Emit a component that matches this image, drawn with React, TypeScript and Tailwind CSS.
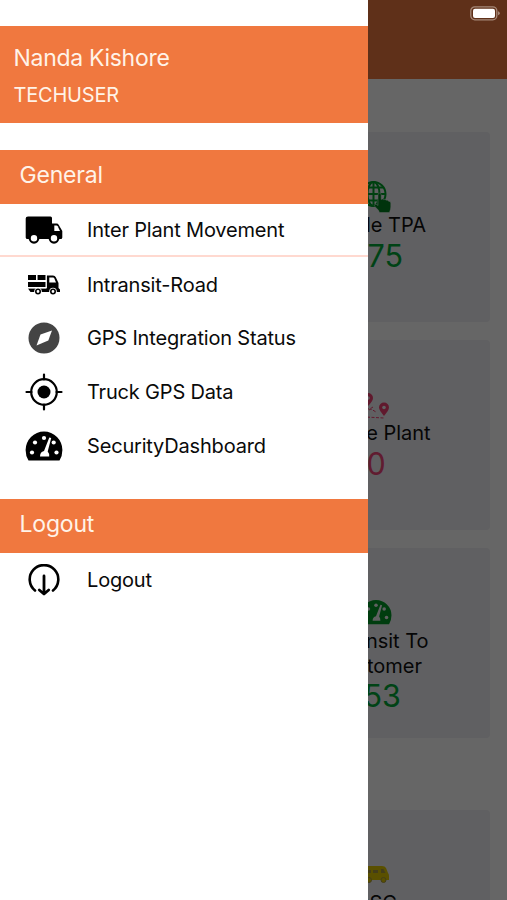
import type { ReactNode } from 'react';

interface MenuItem {
  label: string;
  icon: ReactNode;
  divider?: boolean;
}

const TruckIcon = () => (
  <svg viewBox="0 0 38 28" className="w-[38px] h-7">
    <path d="M3 .5H25.500A1.500 1.500 0 0 1 27 2V7.500h4.500q1.500 0 2.300 1.400L37.300 15v6.500q0 1.500-1.500 1.500H2.500Q.7 23 .7 21.500V2.500Q.7.500 3 .5Z" />
    <path d="M29.300 9.500h2.200q.8 0 1.200.7L35 15h-5.700Z" fill="#fff" />
    <circle cx="9" cy="22.300" r="4.300" fill="#fff" stroke="#000" strokeWidth="2.200" />
    <circle cx="29" cy="22.300" r="4.300" fill="#fff" stroke="#000" strokeWidth="2.200" />
  </svg>
);

const LoadedTruckIcon = () => (
  <svg viewBox="0 0 34 22" className="w-[34px] h-[22px]">
    <path d="M1 1h8v5H1zM10.500 1h8v5h-8zM1 8h17.500v5H1zM1 14.500h18.500V1.500H26q2 0 2.800 1.800L31.500 9v5l1.500 1.500V18H3.500Z" />
    <path d="M1 7h18.500M9.700 1v5.500M1 13.800h18.500M19.500 1v13" stroke="#fff" strokeWidth=".8" />
    <path d="M22.300 3.500H26q1 0 1.400 1L29 8.500h-6.700Z" fill="#fff" />
    <circle cx="11" cy="17.500" r="3.800" fill="#fff" />
    <circle cx="26" cy="17.500" r="3.800" fill="#fff" />
    <circle cx="11" cy="17.500" r="2.200" fill="none" stroke="#000" strokeWidth="1.600" />
    <circle cx="26" cy="17.500" r="2.200" fill="none" stroke="#000" strokeWidth="1.600" />
  </svg>
);

const CompassIcon = () => (
  <svg viewBox="0 0 32 32" className="w-8 h-8">
    <circle cx="16" cy="16" r="15.500" fill="#444" />
    <path d="M24 8.500 20.300 18.500 8.500 23.500 12.500 12.500Z" fill="#fff" />
  </svg>
);

const TargetIcon = () => (
  <svg viewBox="0 0 38 38" className="w-[38px] h-[38px]" stroke="#000" strokeWidth="2.200" strokeLinecap="round">
    <circle cx="19" cy="19" r="12.800" fill="none" />
    <circle cx="19" cy="19" r="6.500" stroke="none" />
    <path d="M19 1.500v5M19 31.500v5M1.500 19h5M31.500 19h5" />
  </svg>
);

interface GaugeIconProps {
  fill?: string;
  hole?: string;
  className?: string;
}

const GaugeIcon = ({ fill = '#000', hole = '#fff', className = 'w-[38px] h-[30px]' }: GaugeIconProps) => (
  <svg viewBox="0 0 38 30" className={className}>
    <path d="M3.500 29.500Q.6 25 .6 19A18.400 18.400 0 0 1 37.400 19q0 6-2.900 10.500Z" fill={fill} />
    <g fill={hole}>
      <circle cx="7" cy="21.500" r="2.100" />
      <circle cx="10" cy="11.500" r="2.100" />
      <circle cx="19" cy="7" r="2.100" />
      <circle cx="28.700" cy="11.500" r="2.100" />
      <circle cx="31.500" cy="21.500" r="2.100" />
      <path d="m24.300 6.500 1.900.6-3.500 13.300q1.600 1.500 1.500 5.100h-9.200q0-4.700 4-5.500Z" />
    </g>
  </svg>
);

const LogoutIcon = () => (
  <svg viewBox="0 0 32 32" className="w-8 h-8" fill="none" stroke="#000" strokeLinecap="round" strokeLinejoin="round">
    <path d="M7 26.500A14.300 14.300 0 1 1 25 26.500" strokeWidth="2.600" />
    <path d="M16 12v17M11.300 26l4.700 4 4.700-4" strokeWidth="2.800" />
  </svg>
);

const GlobeTouchIcon = () => (
  <svg viewBox="0 0 34 32" className="w-[34px] h-8">
    <g fill="none" stroke="#00a02a" strokeWidth="2">
      <circle cx="14.500" cy="13" r="12" />
      <ellipse cx="14.500" cy="13" rx="6" ry="12" />
      <path d="M14.500 1v24M2.500 13h24M5 6.500h19M5 19.500h19" />
    </g>
    <path
      d="M19 14q0-1.900 1.600-1.900T22.200 14v4.500q1.300-1 2.600.2 1.500-.8 2.400.5 1.600-.4 2.300 1 2.300-.2 2.300 1.800v4q0 2-1.300 5.500H20.500q-1-3-4.700-6-1-1.500.3-2 1.500-.5 2.900 1Z"
      fill="#008020"
      stroke="#f0f0f4"
      strokeWidth=".5"
    />
  </svg>
);

const RouteIcon = () => (
  <svg viewBox="0 0 44 28" className="w-11 h-7 mr-[18px]">
    <g fill="#f04070">
      <path d="M23 13q-5-5-5-8a5 5 0 0 1 10 0q0 3-5 8Z" />
      <path d="M39 23q-5-6-5-8.500a5 5 0 0 1 10 0Q44 17 39 23Z" />
    </g>
    <g fill="#f0f0f4">
      <circle cx="23" cy="5" r="1.800" />
      <circle cx="39" cy="14.500" r="1.800" />
    </g>
    <path d="M5 22q5-7 12-6t11-2M20 19l6-3 5 3M4 24h16l19 1" fill="none" stroke="#f04070" strokeWidth="1" strokeDasharray="3 1.500" />
  </svg>
);

const VanIcon = () => (
  <svg viewBox="0 0 28 18" className="w-7 h-[18px]">
    <path d="M2 1h18q3 0 4 2l2 5q1 1 1 3v4H1V2q0-1 1-1Z" fill="#e0c800" />
    <path d="M4 5h5v3H4zM11 5h5v3h-5zM19 4h2.500l2 4H19Z" fill="#a89a40" />
    <circle cx="7" cy="15" r="2.500" fill="#e0c800" stroke="#a89a40" />
    <circle cx="21.500" cy="15" r="2.500" fill="#e0c800" stroke="#a89a40" />
  </svg>
);

const generalItems: MenuItem[] = [
  { label: 'Inter Plant Movement', icon: <TruckIcon />, divider: true },
  { label: 'Intransit-Road', icon: <LoadedTruckIcon /> },
  { label: 'GPS Integration Status', icon: <CompassIcon /> },
  { label: 'Truck GPS Data', icon: <TargetIcon /> },
  { label: 'SecurityDashboard', icon: <GaugeIcon /> },
];

function SectionHeader({ title }: { title: string }) {
  return (
    <h2 className="h-[53.5px] shrink-0 bg-[#f0783f] pl-[19.5px] text-[23px] leading-[50px] tracking-[-0.2px] text-[#fff3e8]">{title}</h2>
  );
}

function MenuRow({ label, icon, divider }: MenuItem) {
  return (
    <button className={`flex h-[53.8px] w-full shrink-0 items-center text-left ${divider ? 'border-b-2 border-[#ffd9d0] pt-0.5' : 'pt-px'}`}>
      <span className="flex w-[87px] shrink-0 justify-center">{icon}</span>
      <span className="text-xl tracking-[-0.18px] text-[#0a0a0a]">{label}</span>
    </button>
  );
}

interface StatCardProps {
  title: string;
  value: string;
  icon: ReactNode;
  valueClass: string;
}

function StatCard({ title, value, icon, valueClass }: StatCardProps) {
  return (
    <div className="flex h-[190px] w-[228px] shrink-0 flex-col items-center rounded-sm bg-[#f0f0f4] pt-[49px]">
      <div className="flex h-8 items-end">{icon}</div>
      <div className="w-[120px] text-center text-xl leading-[24.5px] text-[#111]">{title}</div>
      <div className={`text-[30.5px] leading-9 ${valueClass}`}>{value}</div>
    </div>
  );
}

export default function App() {
  return (
    <div className="relative h-[900px] w-full overflow-hidden bg-white font-['Inter',sans-serif]">
      <div className="h-[79px] bg-[#ee783f]" />
      <div className="flex flex-col items-end pr-[17px] pt-[53px]">
        <StatCard title="Inside TPA" value="275" icon={<GlobeTouchIcon />} valueClass="text-[#00a838]" />
        <div className="h-[18px]" />
        <StatCard title="Inside Plant" value="0" icon={<RouteIcon />} valueClass="text-[#f04878]" />
        <div className="h-[18px]" />
        <StatCard
          title="Intransit To Customer"
          value="153"
          icon={<GaugeIcon fill="#009a26" hole="#f0f0f4" className="mb-[4px] w-[32px] h-[26px]" />}
          valueClass="text-[#00a838]"
        />
        <div className="h-[72px]" />
        <StatCard
          title="DSC"
          value="0"
          icon={<div className="mb-2"><VanIcon /></div>}
          valueClass="text-[#e0c800]"
        />
      </div>

      <div className="absolute inset-0 bg-black/60" />

      <div className="absolute right-[7px] top-[6px]">
        <svg viewBox="0 0 30 15" className="w-[30px] h-[15px]">
          <rect x=".8" y=".8" width="26" height="13" rx="4" fill="none" stroke="#a58878" strokeWidth="1.300" />
          <rect x="3" y="2.700" width="22" height="9.200" rx="2" fill="#fff" />
          <path d="M28 5.300q1.800.4 1.800 2T28 9.300Z" fill="#a58878" />
        </svg>
      </div>

      <nav className="absolute inset-y-0 left-0 flex w-[367.5px] flex-col bg-white pt-[25.5px]">
        <div className="h-[97.500px] shrink-0 bg-[#f0783f] pl-[13.5px] pt-4 text-[#fff3e8]">
          <div className="text-[23px] leading-8 tracking-[-0.3px]">Nanda Kishore</div>
          <div className="mt-[5px] text-xl leading-8 tracking-[-0.2px]">TECHUSER</div>
        </div>
        <div className="h-[27px] shrink-0" />
        <SectionHeader title="General" />
        {generalItems.map(item => (
          <MenuRow key={item.label} {...item} />
        ))}
        <div className="h-[27px] shrink-0" />
        <SectionHeader title="Logout" />
        <MenuRow label="Logout" icon={<LogoutIcon />} />
      </nav>
    </div>
  );
}
